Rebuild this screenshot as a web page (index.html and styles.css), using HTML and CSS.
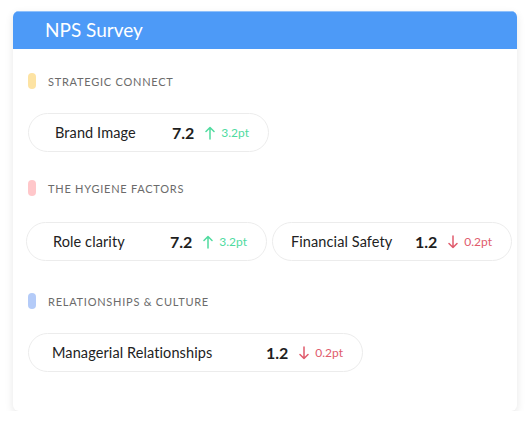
FILE: index.html
```html
<!DOCTYPE html>
<html>
<head>
<meta charset="utf-8">
<link rel="stylesheet" href="styles.css">
</head>
<body>
<div class="card">
  <div class="card-header">NPS Survey</div>
  <div class="card-body">
    <section class="group">
      <div class="group-label"><span class="marker marker--yellow"></span>STRATEGIC CONNECT</div>
      <div class="pills">
        <div class="pill">
          <span class="pill-name">Brand Image</span>
          <span class="pill-value">7.2</span>
          <span class="delta delta--up">
            <svg width="10" height="14" viewBox="0 0 10 14"><path d="M5 13V1.5M1 5.5L5 1.5L9 5.5" fill="none" stroke="currentColor" stroke-width="1.5" stroke-linecap="round" stroke-linejoin="round"/></svg>
            3.2pt</span>
        </div>
      </div>
    </section>
    <section class="group">
      <div class="group-label"><span class="marker marker--pink"></span>THE HYGIENE FACTORS</div>
      <div class="pills pills--pair">
        <div class="pill">
          <span class="pill-name">Role clarity</span>
          <span class="pill-value">7.2</span>
          <span class="delta delta--up">
            <svg width="10" height="14" viewBox="0 0 10 14"><path d="M5 13V1.5M1 5.5L5 1.5L9 5.5" fill="none" stroke="currentColor" stroke-width="1.5" stroke-linecap="round" stroke-linejoin="round"/></svg>
            3.2pt</span>
        </div>
        <div class="pill pill--tight">
          <span class="pill-name">Financial Safety</span>
          <span class="pill-value">1.2</span>
          <span class="delta delta--down">
            <svg width="10" height="14" viewBox="0 0 10 14"><path d="M5 1V12.5M1 8.5L5 12.5L9 8.5" fill="none" stroke="currentColor" stroke-width="1.5" stroke-linecap="round" stroke-linejoin="round"/></svg>
            0.2pt</span>
        </div>
      </div>
    </section>
    <section class="group">
      <div class="group-label"><span class="marker marker--blue"></span>RELATIONSHIPS &amp; CULTURE</div>
      <div class="pills">
        <div class="pill pill--wide">
          <span class="pill-name">Managerial Relationships</span>
          <span class="pill-value">1.2</span>
          <span class="delta delta--down">
            <svg width="10" height="14" viewBox="0 0 10 14"><path d="M5 1V12.5M1 8.5L5 12.5L9 8.5" fill="none" stroke="currentColor" stroke-width="1.5" stroke-linecap="round" stroke-linejoin="round"/></svg>
            0.2pt</span>
        </div>
      </div>
    </section>
  </div>
</div>
</body>
</html>
```

FILE: styles.css
```css
* { box-sizing: border-box; }
html, body { margin: 0; padding: 0; background: #ffffff; }
body {
  font-family: "Lato", "Noto Sans", sans-serif;
  padding: 11px 14px 0 13px;
}
.card {
  width: 504px;
  height: 400px;
  background: #fff;
  border-radius: 6px;
  box-shadow: 0 3px 9px rgba(0,0,0,0.10);
  overflow: hidden;
}
.card-header {
  height: 38px;
  background: #4d9af7;
  border-top: 1px solid #8fc0fb;
  color: #fff;
  font-size: 19px;
  line-height: 36px;
  padding-left: 32px;
}
.card-body {
  padding: 24px 0 0 15px;
  display: flex;
  flex-direction: column;
  gap: 28px;
}
.group-label {
  display: flex;
  align-items: center;
  height: 16px;
  font-size: 11px;
  letter-spacing: 0.75px;
  color: #6b6b6b;
}
.marker {
  width: 8px;
  height: 16px;
  border-radius: 4px;
  margin-right: 12px;
}
.marker--yellow { background: #fde3a3; }
.marker--pink { background: #ffc7ca; }
.marker--blue { background: #b4cbf8; }
.pills {
  display: flex;
  gap: 5px;
  margin-top: 24px;
}
.pills--pair { margin: 26px 0 4px -2px; }
.pill {
  width: 241px;
  height: 39px;
  border: 1px solid #ececec;
  border-radius: 20px;
  display: flex;
  align-items: center;
  padding: 0 19px 0 26px;
}
.pill--tight { width: 240px; padding-left: 18px; }
.pill--wide { width: 335px; padding-left: 23px; }
.pill-name {
  flex: 1;
  font-size: 14.5px;
  letter-spacing: 0.1px;
  color: #222;
}
.pill-value {
  font-size: 16px;
  font-weight: 700;
  color: #1e1e1e;
  margin-right: 11px;
}
.delta {
  display: flex;
  align-items: center;
  font-size: 12px;
}
.delta svg { margin-right: 6px; }
.delta--up { color: #4fdb9f; }
.delta--down { color: #e05b6c; }
```
